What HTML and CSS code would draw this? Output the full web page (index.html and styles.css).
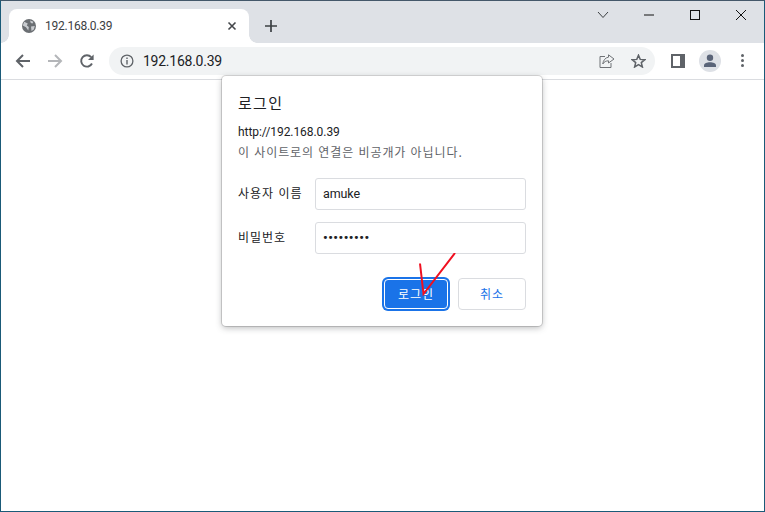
FILE: index.html
```html
<!DOCTYPE html>
<html lang="ko">
<head>
<meta charset="utf-8">
<title>192.168.0.39</title>
<link rel="stylesheet" href="styles.css">
</head>
<body>
<div class="window">
  <div class="titlebar">
    <div class="tab">
      <svg class="globe" width="16" height="16" viewBox="0 0 16 16"><circle cx="8" cy="8" r="7" fill="#6b6f73"/><path d="M3.200 3.800 6.800 5.600 5.800 7.600 7.800 9 7.300 12.500 5 9.200 1.800 7.500ZM9 2.500 12.500 3.800 11.500 5.500 9.800 5ZM10 8.500 13.800 8 12.800 11.500 10.500 13Z" fill="#c9ccd0"/></svg>
      <span class="tab-title">192.168.0.39</span>
      <svg class="tab-close" width="10" height="10" viewBox="0 0 10 10"><path d="M1.500 1.500 8.500 8.500M8.500 1.500 1.500 8.500" stroke="#44474b" stroke-width="1.600" fill="none"/></svg>
    </div>
    <svg class="newtab" width="12" height="12" viewBox="0 0 12 12"><path d="M6 0V12M0 6H12" stroke="#3c4043" stroke-width="1.700" fill="none"/></svg>
    <div class="caption">
      <svg class="cap cap-list" width="12" height="8" viewBox="0 0 12 8"><path d="M1 1 6 6.500 11 1" stroke="#3c4043" stroke-width="1" fill="none"/></svg>
      <svg class="cap cap-min" width="10" height="2" viewBox="0 0 10 2"><path d="M0 1H10" stroke="#111" stroke-width="1"/></svg>
      <svg class="cap cap-max" width="10" height="10" viewBox="0 0 10 10"><rect x=".5" y=".5" width="9" height="9" stroke="#111" fill="none"/></svg>
      <svg class="cap cap-close" width="10" height="10" viewBox="0 0 10 10"><path d="M0 0 10 10M10 0 0 10" stroke="#111" stroke-width="1" fill="none"/></svg>
    </div>
  </div>
  <div class="toolbar">
    <svg class="nav" width="16" height="16" viewBox="0 0 16 16"><path d="M15 8H2M8 2 2 8 8 14" stroke="#5f6368" stroke-width="2" fill="none"/></svg>
    <svg class="nav" width="16" height="16" viewBox="0 0 16 16"><path d="M1 8H14M8 2 14 8 8 14" stroke="#b4b6b9" stroke-width="2" fill="none"/></svg>
    <svg class="nav" width="16" height="16" viewBox="0 0 16 16"><path d="M13 10.500A5.700 5.700 0 1 1 12.200 4.200" stroke="#5f6368" stroke-width="1.900" fill="none"/><path d="M14.600 1.400V7H9Z" fill="#5f6368"/></svg>
    <div class="omnibox">
      <svg class="info" width="14" height="14" viewBox="0 0 14 14"><circle cx="7" cy="7" r="5.900" stroke="#5f6368" stroke-width="1.300" fill="none"/><path d="M7 6V10.500" stroke="#5f6368" stroke-width="1.400"/><path d="M7 3.400V5" stroke="#5f6368" stroke-width="1.400"/></svg>
      <span class="url">192.168.0.39</span>
      <svg class="share" width="16" height="14" viewBox="0 0 16 14"><path d="M6 2.500H1V13.500H12V9" stroke="#6f7276" stroke-width="1" fill="none"/><path d="M9.500 .8 15 5 9.500 9V6.800C7 6.800 5 7.800 3.800 10 4 6.500 6.500 3.500 9.500 3.200Z" stroke="#6f7276" stroke-width="1" fill="none"/></svg>
      <svg class="star" width="15" height="14" viewBox="0 0 15 14"><path d="M7.500 1.200 9.200 5.400 13.800 5.700 10.300 8.600 11.400 13 7.500 10.600 3.600 13 4.700 8.600 1.200 5.700 5.800 5.400Z" stroke="#5f6368" stroke-width="1.500" fill="none"/></svg>
    </div>
    <svg class="panel" width="14" height="14" viewBox="0 0 14 14"><rect width="14" height="14" fill="#5f6368"/><rect x="2" y="2" width="7" height="10" fill="#fff"/></svg>
    <div class="avatar"><svg width="14" height="14" viewBox="0 0 14 14"><circle cx="7" cy="3.800" r="3.200" fill="#5a6478"/><path d="M1 13V11.500C1 9.500 4 8.300 7 8.300S13 9.500 13 11.500V13Z" fill="#5a6478"/></svg></div>
    <div class="menu"><i></i><i></i><i></i></div>
  </div>
  <div class="content"></div>

  <div class="dialog">
    <h1 class="dialog-title">로그인</h1>
    <p class="origin">http://192.168.0.39</p>
    <p class="notice">이 사이트로의 연결은 비공개가 아닙니다.</p>
    <div class="field field-user">
      <label class="field-label">사용자 이름</label>
      <div class="input">amuke</div>
    </div>
    <div class="field field-pass">
      <label class="field-label">비밀번호</label>
      <div class="input input-pass">•••••••••</div>
    </div>
    <div class="actions">
      <button class="btn btn-primary">로그인</button>
      <button class="btn btn-cancel">취소</button>
    </div>
  </div>
  <svg class="scribble" width="50" height="50" viewBox="0 0 50 50"><path d="M5 10.500 8.500 41 40 0" stroke="#f01020" stroke-width="2" fill="none"/></svg>
</div>
</body>
</html>
```
FILE: styles.css
```css
* { box-sizing: border-box; }
html, body { margin: 0; height: 100%; background: #fff; }
body { font-family: "Noto Sans CJK KR", "Liberation Sans", sans-serif; overflow: hidden; }
.window {
  position: relative;
  width: 765px;
  height: 512px;
  border: 1px solid #1a5a78;
  border-top-color: #44586a;
  display: flex;
  flex-direction: column;
  overflow: hidden;
}
.titlebar {
  height: 42px;
  background: #dee1e6;
  display: flex;
  align-items: flex-end;
  padding-left: 8px;
  position: relative;
  flex: none;
}
.tab {
  width: 240px;
  height: 34px;
  background: #fff;
  border-radius: 8px 8px 0 0;
  display: flex;
  align-items: center;
  padding: 0 9px 0 12px;
  position: relative;
}
.tab::before, .tab::after {
  content: "";
  position: absolute;
  bottom: 0;
  width: 8px;
  height: 8px;
}
.tab::before { left: -8px; background: radial-gradient(circle at 0 0, transparent 7.500px, #fff 8px); }
.tab::after { right: -8px; background: radial-gradient(circle at 100% 0, transparent 7.500px, #fff 8px); }
.tab-title {
  margin-left: 8px;
  flex: 1;
  font: 12px "Roboto", "Liberation Sans", sans-serif;
  letter-spacing: -.25px;
  color: #3c4043;
  padding-bottom: 1px;
}
.globe { flex: none; }
.tab-close { flex: none; margin-right: 3px; }
.newtab { margin: 0 0 11px 16px; }
.caption { margin-left: auto; align-self: flex-start; position: relative; width: 190px; height: 30px; }
.cap { position: absolute; }
.cap-list { left: 23px; top: 10px; }
.cap-min { left: 70px; top: 13px; }
.cap-max { left: 116px; top: 9px; }
.cap-close { left: 162px; top: 9px; }
.toolbar {
  height: 37px;
  background: #fff;
  border-bottom: 1px solid #dadce0;
  display: flex;
  align-items: center;
  padding: 0 0 1px 14px;
  flex: none;
}
.nav { margin-right: 16px; flex: none; }
.omnibox {
  width: 546px;
  height: 28px;
  margin-left: -2px;
  background: #f1f3f4;
  border-radius: 14px;
  display: flex;
  align-items: center;
  padding: 0 9px 0 11px;
}
.info { flex: none; }
.url {
  margin-left: 9px;
  flex: 1;
  font: 14px "Roboto", "Liberation Sans", sans-serif;
  letter-spacing: -.25px;
  color: #202124;
}
.share { margin-right: 16px; }
.panel { margin-left: 16px; }
.avatar {
  width: 22px;
  height: 22px;
  border-radius: 50%;
  background: #dee1e6;
  margin-left: 14px;
  display: flex;
  align-items: center;
  justify-content: center;
}
.menu { margin-left: 20px; display: flex; flex-direction: column; gap: 2px; }
.menu i { width: 3px; height: 3px; border-radius: 50%; background: #5f6368; display: block; }
.content { flex: 1; background: #fff; }
.dialog {
  position: absolute;
  left: 221px;
  top: 75px;
  width: 320px;
  height: 250px;
  background: #fff;
  border-radius: 4px;
  box-shadow: 0 0 0 1px rgba(0,0,0,.14), 0 2px 6px rgba(60,64,67,.35);
  padding: 16px;
  display: flex;
  flex-direction: column;
}
.dialog-title { margin: 0; font-size: 15px; font-weight: 400; letter-spacing: 1.3px; line-height: 22px; color: #202124; }
.origin { margin: 9px 0 0; font: 12px/18px "Roboto", "Liberation Sans", sans-serif; letter-spacing: -.06px; color: #202124; }
.notice { margin: 2px 0 0; font-size: 12px; letter-spacing: .92px; line-height: 18px; color: #5f6368; }
.field { display: flex; align-items: center; height: 32px; }
.field-user { margin-top: 17px; }
.field-pass { margin-top: 12px; }
.field-label { width: 77px; font-size: 12px; letter-spacing: 1px; color: #202124; flex: none; padding-bottom: 4px; }
.input {
  width: 211px;
  height: 32px;
  border: 1px solid #dadce0;
  border-radius: 3px;
  padding: 0 7px;
  font: 12.500px/30px "Roboto", "Liberation Sans", sans-serif;
  letter-spacing: -.1px;
  color: #202124;
}
.input-pass { font-size: 13px; letter-spacing: .5px; font-weight: 700; }
.actions { margin-top: 24px; display: flex; justify-content: flex-end; gap: 9px; }
.btn {
  width: 68px;
  height: 32px;
  border-radius: 4px;
  font-family: "Noto Sans CJK KR", sans-serif;
  font-size: 12px;
  letter-spacing: 1px;
  padding: 0 0 2px;
}
.btn-primary {
  background: #1a73e8;
  border: 1px solid #fff;
  box-shadow: 0 0 0 2px #1a73e8;
  color: #fff;
  width: 64px;
  height: 30px;
  margin: 1px 1px 0 0;
}
.btn-cancel { background: #fff; border: 1px solid #dadce0; color: #1a73e8; }
.scribble { position: absolute; left: 414px; top: 252px; pointer-events: none; }
```
